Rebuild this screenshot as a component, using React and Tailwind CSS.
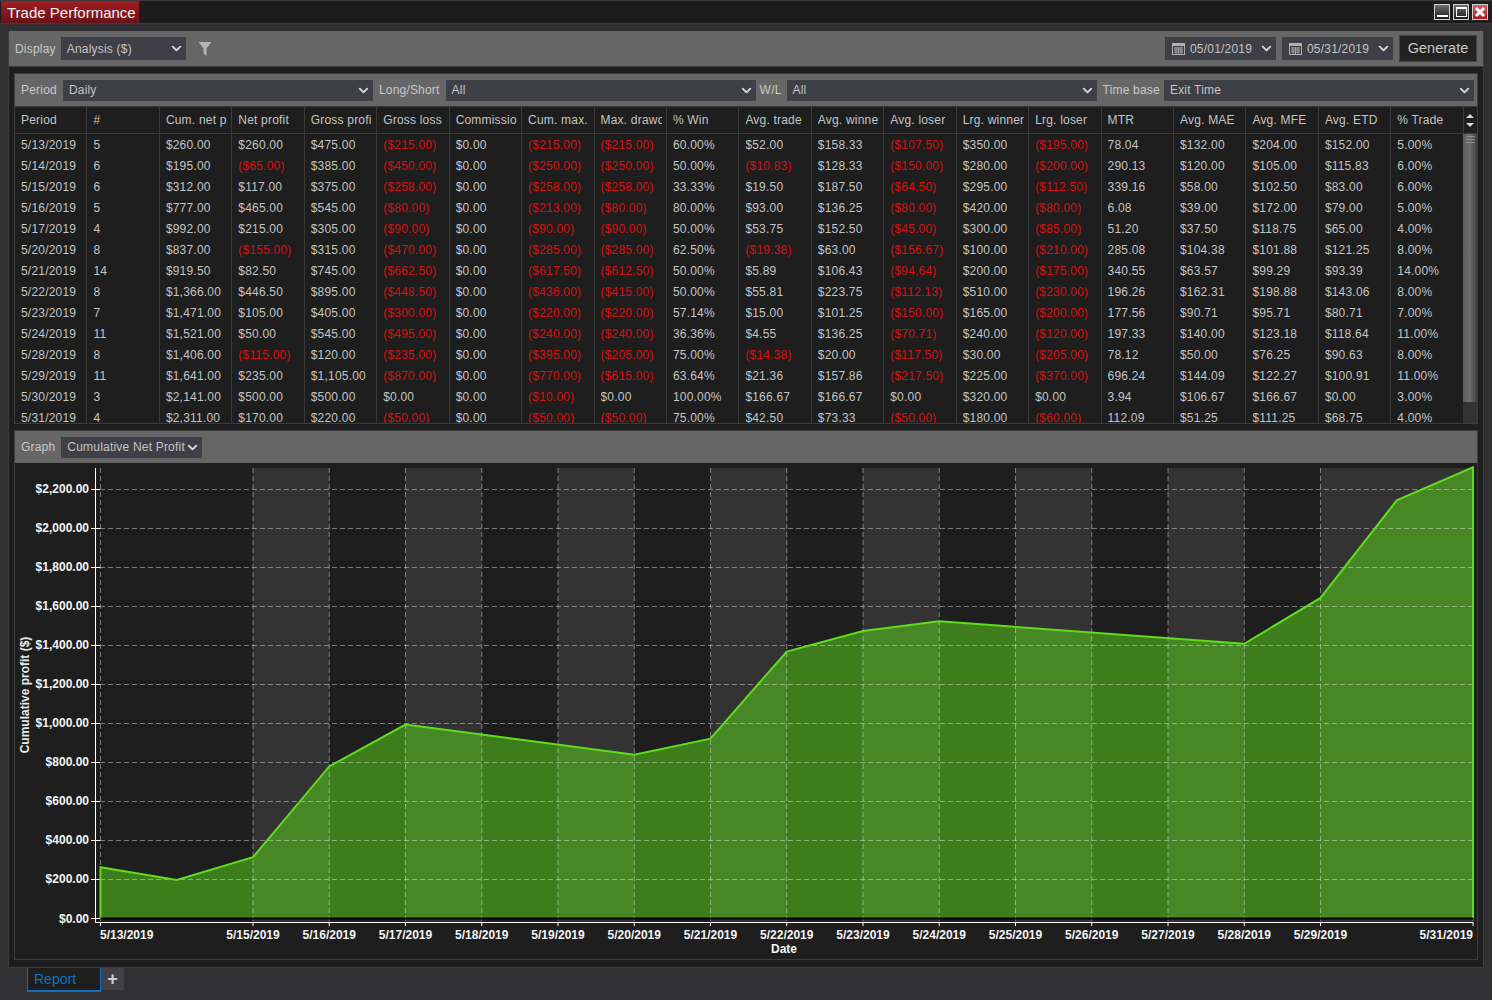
import { ChevronDown } from "lucide-react";

const FONT = "font-['Liberation_Sans',Arial,sans-serif]";
const HEADERS = ["Period", "#", "Cum. net profit", "Net profit", "Gross profit", "Gross loss", "Commission", "Cum. max.", "Max. drawdown", "% Win", "Avg. trade", "Avg. winner", "Avg. loser", "Lrg. winner", "Lrg. loser", "MTR", "Avg. MAE", "Avg. MFE", "Avg. ETD", "% Trade"];

const ROWS = [
  ["5/13/2019", "5", "$260.00", "$260.00", "$475.00", "($215.00)", "$0.00", "($215.00)", "($215.00)", "60.00%", "$52.00", "$158.33", "($107.50)", "$350.00", "($195.00)", "78.04", "$132.00", "$204.00", "$152.00", "5.00%"],
  ["5/14/2019", "6", "$195.00", "($65.00)", "$385.00", "($450.00)", "$0.00", "($250.00)", "($250.00)", "50.00%", "($10.83)", "$128.33", "($150.00)", "$280.00", "($200.00)", "290.13", "$120.00", "$105.00", "$115.83", "6.00%"],
  ["5/15/2019", "6", "$312.00", "$117.00", "$375.00", "($258.00)", "$0.00", "($258.00)", "($258.00)", "33.33%", "$19.50", "$187.50", "($64.50)", "$295.00", "($112.50)", "339.16", "$58.00", "$102.50", "$83.00", "6.00%"],
  ["5/16/2019", "5", "$777.00", "$465.00", "$545.00", "($80.00)", "$0.00", "($213.00)", "($80.00)", "80.00%", "$93.00", "$136.25", "($80.00)", "$420.00", "($80.00)", "6.08", "$39.00", "$172.00", "$79.00", "5.00%"],
  ["5/17/2019", "4", "$992.00", "$215.00", "$305.00", "($90.00)", "$0.00", "($90.00)", "($90.00)", "50.00%", "$53.75", "$152.50", "($45.00)", "$300.00", "($85.00)", "51.20", "$37.50", "$118.75", "$65.00", "4.00%"],
  ["5/20/2019", "8", "$837.00", "($155.00)", "$315.00", "($470.00)", "$0.00", "($285.00)", "($285.00)", "62.50%", "($19.38)", "$63.00", "($156.67)", "$100.00", "($210.00)", "285.08", "$104.38", "$101.88", "$121.25", "8.00%"],
  ["5/21/2019", "14", "$919.50", "$82.50", "$745.00", "($662.50)", "$0.00", "($617.50)", "($612.50)", "50.00%", "$5.89", "$106.43", "($94.64)", "$200.00", "($175.00)", "340.55", "$63.57", "$99.29", "$93.39", "14.00%"],
  ["5/22/2019", "8", "$1,366.00", "$446.50", "$895.00", "($448.50)", "$0.00", "($436.00)", "($415.00)", "50.00%", "$55.81", "$223.75", "($112.13)", "$510.00", "($230.00)", "196.26", "$162.31", "$198.88", "$143.06", "8.00%"],
  ["5/23/2019", "7", "$1,471.00", "$105.00", "$405.00", "($300.00)", "$0.00", "($220.00)", "($220.00)", "57.14%", "$15.00", "$101.25", "($150.00)", "$165.00", "($200.00)", "177.56", "$90.71", "$95.71", "$80.71", "7.00%"],
  ["5/24/2019", "11", "$1,521.00", "$50.00", "$545.00", "($495.00)", "$0.00", "($240.00)", "($240.00)", "36.36%", "$4.55", "$136.25", "($70.71)", "$240.00", "($120.00)", "197.33", "$140.00", "$123.18", "$118.64", "11.00%"],
  ["5/28/2019", "8", "$1,406.00", "($115.00)", "$120.00", "($235.00)", "$0.00", "($395.00)", "($205.00)", "75.00%", "($14.38)", "$20.00", "($117.50)", "$30.00", "($205.00)", "78.12", "$50.00", "$76.25", "$90.63", "8.00%"],
  ["5/29/2019", "11", "$1,641.00", "$235.00", "$1,105.00", "($870.00)", "$0.00", "($770.00)", "($615.00)", "63.64%", "$21.36", "$157.86", "($217.50)", "$225.00", "($370.00)", "696.24", "$144.09", "$122.27", "$100.91", "11.00%"],
  ["5/30/2019", "3", "$2,141.00", "$500.00", "$500.00", "$0.00", "$0.00", "($10.00)", "$0.00", "100.00%", "$166.67", "$166.67", "$0.00", "$320.00", "$0.00", "3.94", "$106.67", "$166.67", "$0.00", "3.00%"],
  ["5/31/2019", "4", "$2,311.00", "$170.00", "$220.00", "($50.00)", "$0.00", "($50.00)", "($50.00)", "75.00%", "$42.50", "$73.33", "($50.00)", "$180.00", "($60.00)", "112.09", "$51.25", "$166.67", "$111.25", "$68.75", "4.00%"].filter((_, i) => i !== 17),
];

function Chevron() {
  return <ChevronDown size={15} strokeWidth={3} className="shrink-0 text-[#d8d8d8]" />;
}

function Select({ children, className = "" }) {
  return (
    <div className={`flex items-center justify-between bg-[#3f3f47] pl-[6px] pr-[2px] text-[12px] text-[#c4c4c4] ${className}`}>
      <span className="tracking-[0.2px] whitespace-nowrap">{children}</span>
      <Chevron />
    </div>
  );
}

function CalendarIcon() {
  return (
    <svg width="13" height="12" viewBox="0 0 13 12" className="shrink-0">
      <rect x="0.5" y="0.5" width="12" height="11" fill="#3f3f47" stroke="#b0b0b0" />
      <rect x="0" y="0" width="13" height="3" fill="#b0b0b0" />
      <path d="M2 5h9M2 7h9M2 9h9M4 4v7M6.5 4v7M9 4v7" stroke="#a0a0a0" strokeWidth="1" />
    </svg>
  );
}

function DateBox({ value }) {
  return (
    <div className="flex h-[23px] w-[111px] items-center bg-[#3f3f47] pl-[7px] pr-[2px] text-[12px] text-[#c4c4c4]">
      <CalendarIcon />
      <span className="ml-[5px] tracking-[0.2px]">{value}</span>
      <span className="ml-auto"><Chevron /></span>
    </div>
  );
}

function WindowButton({ children, className = "" }) {
  return (
    <div className={`flex h-[16px] w-[16px] items-center justify-center border border-[#d0d0d0] ${className}`}>
      {children}
    </div>
  );
}

function TitleBar() {
  return (
    <div className="flex h-[24px] items-stretch justify-between border-b border-t border-[#3c3c3c] bg-[#1c1c1c]">
      <div className="ml-px flex w-[138px] items-center bg-gradient-to-b from-[#a01c24] to-[#6a1218] pl-[6px] text-[15px] leading-none text-[#f0f0f0]">
        Trade Performance
      </div>
      <div className="flex items-center gap-[3px] pr-[4px]">
        <WindowButton className="items-end bg-gradient-to-b from-[#707070] to-[#1c1c1c] pb-[2px]">
          <div className="h-[2px] w-[11px] bg-white" />
        </WindowButton>
        <WindowButton className="bg-gradient-to-b from-[#707070] to-[#1c1c1c]">
          <div className="h-[10px] w-[11px] border border-t-2 border-white" />
        </WindowButton>
        <WindowButton className="bg-gradient-to-b from-[#d8606a] to-[#a8141c]">
          <svg width="12" height="12" viewBox="0 0 12 12"><path d="M2 2l8 8M10 2l-8 8" stroke="#fff" strokeWidth="3" /></svg>
        </WindowButton>
      </div>
    </div>
  );
}

function Toolbar() {
  return (
    <div className="flex h-[36px] items-center border-b border-[#3c3c3c] bg-[#666666] pl-[6px] pr-[6px] text-[12px] text-[#c8c8c8]">
      <span className="tracking-[0.2px]">Display</span>
      <Select className="ml-[5px] h-[23px] w-[125px]">Analysis ($)</Select>
      <svg width="14" height="16" viewBox="0 0 14 16" className="ml-[12px]">
        <path d="M0.5 1h13L8.5 7.5V15L5.5 12.5V7.5z" fill="#b4b4b4" />
      </svg>
      <div className="ml-auto flex items-center gap-[6px]">
        <DateBox value="05/01/2019" />
        <DateBox value="05/31/2019" />
        <div className="flex h-[27px] w-[78px] items-center justify-center border border-[#444444] bg-[#222222] text-[14.5px] text-[#c8c8c8]">
          Generate
        </div>
      </div>
    </div>
  );
}

function FilterBar() {
  return (
    <div className="flex h-[32px] items-center gap-[6px] bg-[#666666] pl-[6px] pr-[3px] text-[12px] text-[#c8c8c8]">
      <span className="tracking-[0.2px]">Period</span>
      <Select className="h-[21px] w-[310px]">Daily</Select>
      <span className="tracking-[0.2px]">Long/Short</span>
      <Select className="h-[21px] w-[310px]">All</Select>
      <span className="-ml-[2px] tracking-[0.2px]">W/L</span>
      <Select className="-ml-[1px] h-[21px] w-[310px]">All</Select>
      <span className="tracking-[0.2px]">Time base</span>
      <Select className="-ml-[2px] h-[21px] grow">Exit Time</Select>
    </div>
  );
}

function Cell({ value, header }) {
  const negative = value.startsWith("(");
  return (
    <div className={`flex items-center overflow-hidden border-r border-[#3a3a3a] pl-[6px] pr-[4px] ${negative ? "text-[#d81010]" : "text-[#c4c4c4]"}`}>
      <span className={`block w-full overflow-hidden whitespace-nowrap tracking-[0.2px] ${header ? "" : ""}`}>{value}</span>
    </div>
  );
}

function PerformanceTable() {
  return (
    <div className={`overflow-hidden text-[12px]`}>
      <div className="flex h-[28px] border-b border-t border-[#3a3a3a] bg-[#1e1e1e]">
        <div className="grid w-[1449px] grid-cols-[repeat(20,72.45px)]">
          {HEADERS.map(h => <Cell key={h} value={h} header />)}
        </div>
        <div className="flex w-[14px] flex-col items-center justify-center gap-[5px]">
          <svg width="8" height="4" viewBox="0 0 8 4"><path d="M0 4l4-4 4 4z" fill="#d8d8d8" /></svg>
          <svg width="8" height="4" viewBox="0 0 8 4"><path d="M0 0l4 4 4-4z" fill="#d8d8d8" /></svg>
        </div>
      </div>
      <div className="flex h-[289px]">
        <div className="w-[1449px] overflow-hidden">
          {ROWS.map(row => (
            <div key={row[0]} className="grid h-[21px] grid-cols-[repeat(20,72.45px)]">
              {row.map((v, i) => <Cell key={i} value={v} />)}
            </div>
          ))}
        </div>
        <div className="w-[14px] bg-[#343434]">
          <div className="flex h-[268px] flex-col items-center gap-[2px] bg-gradient-to-r from-[#5e5e5e] via-[#6e6e6e] to-[#3e3e3e] pt-[2px]">
            <div className="h-px w-[9px] bg-[#8a8a8a]" />
            <div className="h-px w-[9px] bg-[#8a8a8a]" />
            <div className="h-px w-[9px] bg-[#8a8a8a]" />
          </div>
        </div>
      </div>
    </div>
  );
}

// graph coordinates are page pixels, viewBox starts at the chart's corner
const X0 = 100.5;
const STEP = 76.25;
const xAt = i => X0 + STEP * i;
const yAt = v => 920 - v * 0.19505;

const POINTS = [[0, 260], [1, 195], [2, 312], [3, 777], [4, 992], [7, 837], [8, 919.5], [9, 1366], [10, 1471], [11, 1521], [15, 1406], [16, 1641], [17, 2141], [18, 2311]];
const X_LABELS = [[0, "5/13/2019"], [2, "5/15/2019"], [3, "5/16/2019"], [4, "5/17/2019"], [5, "5/18/2019"], [6, "5/19/2019"], [7, "5/20/2019"], [8, "5/21/2019"], [9, "5/22/2019"], [10, "5/23/2019"], [11, "5/24/2019"], [12, "5/25/2019"], [13, "5/26/2019"], [14, "5/27/2019"], [15, "5/28/2019"], [16, "5/29/2019"], [18, "5/31/2019"]];
const Y_LABELS = [];
for (let v = 0; v <= 2200; v += 200) {
  Y_LABELS.push(v);
}
const money = v => "$" + v.toLocaleString("en-US") + ".00";

function Graph() {
  const line = POINTS.map(([i, v]) => `${xAt(i)},${yAt(v)}`).join(" ");
  const area = `M${xAt(0)},920 L${line} L${xAt(18)},920 Z`;
  const top = 470;
  return (
    <svg width="1462" height="496" viewBox="15 465 1462 496" className="block font-['Liberation_Sans',Arial,sans-serif]">
      {[2, 4, 6, 8, 10, 12, 14].map(i => (
        <rect key={i} x={xAt(i)} y={top} width={STEP} height={454} fill="#333333" />
      ))}
      <rect x={xAt(16)} y={top} width={STEP * 2} height={454} fill="#333333" />
      <path d={area} fill="#5cdc1a" fillOpacity="0.5" />
      {Y_LABELS.map(v => (
        <g key={v}>
          <line x1="91" x2="100" y1={Math.round(yAt(v)) + 0.5} y2={Math.round(yAt(v)) + 0.5} stroke="#fff" />
          {v > 0 && <line x1="100" x2="1473" y1={Math.round(yAt(v)) + 0.5} y2={Math.round(yAt(v)) + 0.5} stroke="#fff" strokeOpacity="0.4" strokeDasharray="5 3" />}
          <text x="89" y={yAt(v) + 4.5} textAnchor="end" fontSize="12" fontWeight="700" fill="#f4f4f4">{money(v)}</text>
        </g>
      ))}
      {X_LABELS.map(([i, label]) => (
        <g key={label}>
          <line x1={xAt(i)} x2={xAt(i)} y1={top} y2="924" stroke="#fff" strokeOpacity="0.4" strokeDasharray="5 3" />
          <line x1={xAt(i)} x2={xAt(i)} y1="924" y2="928" stroke="#fff" />
          <text x={i === 0 ? 100 : i === 18 ? 1473 : xAt(i)} y="941" textAnchor={i === 0 ? "start" : i === 18 ? "end" : "middle"} fontSize="12" fontWeight="700" fill="#f4f4f4">{label}</text>
        </g>
      ))}
      <path d={`M${xAt(0)},920 L${line} L${xAt(18)},920`} fill="none" stroke="#5fdc1c" strokeWidth="2" />
      <line x1={xAt(0)} x2={xAt(18)} y1="920.5" y2="920.5" stroke="#000" strokeWidth="2" />
      <line x1="95.5" x2="95.5" y1={top} y2="925" stroke="#fff" />
      <line x1="95" x2="1473" y1="924.5" y2="924.5" stroke="#fff" />
      <text x="784" y="955" textAnchor="middle" fontSize="12" fontWeight="700" fill="#f4f4f4">Date</text>
      <text transform="translate(29,697) rotate(-90)" textAnchor="middle" fontSize="12" fontWeight="700" fill="#e8e8e8">Cumulative profit ($)</text>
    </svg>
  );
}

export default function App() {
  return (
    <div className={`flex h-[1000px] w-[1492px] flex-col overflow-hidden bg-[#303033] ${FONT}`}>
      <TitleBar />
      <div className="ml-[8px] mr-[8px] mt-[7px] flex h-[937px] flex-col border-b border-l border-r border-[#3c3c3c] bg-[#1e1e1e]">
        <Toolbar />
        <div className="mx-[5px] mt-[6px] flex flex-col gap-[6px]">
          <div className="w-[1464px] border-b border-l border-r border-t border-[#3c3c3c]">
            <FilterBar />
            <PerformanceTable />
          </div>
          <div className="w-[1464px] border border-[#3c3c3c]">
            <div className="flex h-[32px] items-center gap-[6px] bg-[#666666] pl-[6px] text-[12px] text-[#c8c8c8]">
              <span className="tracking-[0.2px]">Graph</span>
              <Select className="h-[21px] w-[141px]">Cumulative Net Profit</Select>
            </div>
            <Graph />
          </div>
        </div>
      </div>
      <div className="ml-[27px] flex items-start">
        <div className="flex h-[24px] w-[74px] items-center border-b-2 border-l border-r border-[#0f6fc0] bg-[#1e1e1e] pl-[6px] text-[14px] text-[#1170bf]">
          Report
        </div>
        <div className="flex h-[22px] w-[23px] items-center justify-center bg-[#404046] text-[18px] font-bold leading-none text-[#d0d0d0]">+</div>
      </div>
    </div>
  );
}
